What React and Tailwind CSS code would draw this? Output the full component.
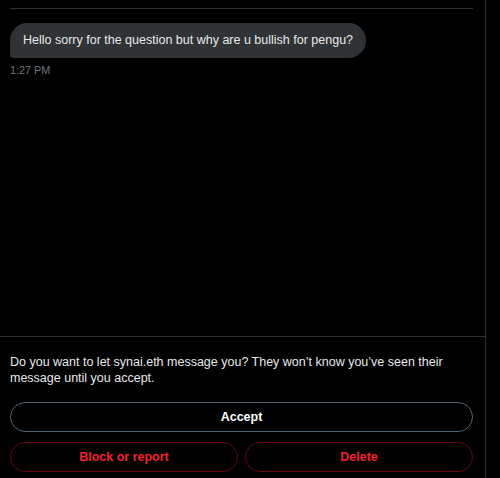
export default function App() {
  return (
    <div
      className="w-[500px] h-[478px] bg-black overflow-hidden flex"
      style={{ fontFamily: '"Liberation Sans", Arial, sans-serif' }}
    >
      <div className="w-[486px] h-full border-r border-[#2f3336] flex flex-col">
        <div className="flex-1 flex flex-col pl-[10px] pr-[12px]">
          <div className="mt-[8px] h-px bg-[#2f3336]" />
          <div className="mt-[14px] flex">
            <div className="bg-[#2f3336] rounded-[18px] rounded-bl-[4px] px-[13px] py-[9px] text-[12.5px] leading-[16.7px] text-[#e7e9ea]">
              Hello sorry for the question but why are u bullish for pengu?
            </div>
          </div>
          <div className="mt-[5px] text-[10.8px] leading-[14px] text-[#71767b]">1:27 PM</div>
        </div>
        <div className="border-t border-[#2f3336] pl-[10px] pr-[12px] pt-[17px] pb-[6px]">
          <p className="text-[12.5px] leading-[16.7px] text-[#e7e9ea]">
            Do you want to let synai.eth message you? They won’t know you’ve seen their message until you accept.
          </p>
          <button className="mt-[15px] w-full h-[30px] rounded-full border border-[#536471] text-white font-bold text-[12.5px] flex items-center justify-center">
            Accept
          </button>
          <div className="mt-[10px] flex gap-[7px]">
            <button className="flex-1 h-[30px] rounded-full border border-[#67070f] text-[#f4212e] font-bold text-[12.5px] flex items-center justify-center">
              Block or report
            </button>
            <button className="flex-1 h-[30px] rounded-full border border-[#67070f] text-[#f4212e] font-bold text-[12.5px] flex items-center justify-center">
              Delete
            </button>
          </div>
        </div>
      </div>
    </div>
  );
}
